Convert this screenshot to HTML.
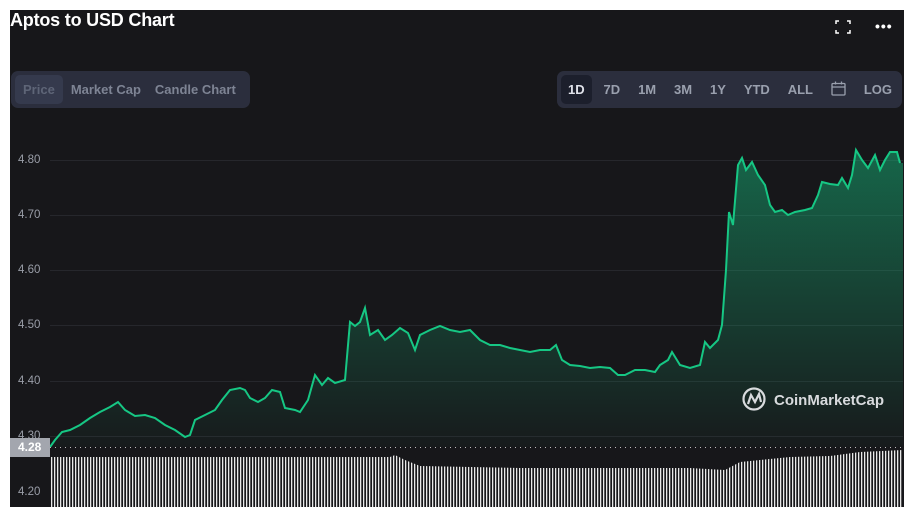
<!DOCTYPE html><html><head><style>
body{margin:0;width:914px;height:518px;background:#fff;overflow:hidden;font-family:"Liberation Sans",sans-serif;position:relative}
#p{position:absolute;left:10px;top:10px;width:894px;height:497px;background:#17171a}
.t{position:absolute;left:10px;top:10px;color:#fff;font-weight:bold;font-size:18px;line-height:21px;letter-spacing:-0.2px}
.grp{position:absolute;height:37px;top:71px;background:#2b2e3d;border-radius:7px;display:flex;align-items:center;padding:0 4px;box-sizing:border-box;font-size:13px;font-weight:bold;color:#7e8494}
.grp span{padding:0 6px;height:29px;line-height:29px;border-radius:5px}
.ax{position:absolute;left:18px;color:#9a9ea8;font-size:11.5px}
</style></head><body>
<div id="p"></div>
<div class="t">Aptos to USD Chart</div>
<div style="position:absolute;left:835px;top:20px;width:16px;height:14px;color:#fff">
<svg width="16" height="14"><path d="M1 4V1H4M12 1H15V4M15 10V13H12M4 13H1V10" stroke="#fff" stroke-width="1.5" fill="none"/></svg></div>
<div style="position:absolute;left:875px;top:18px;color:#fff;font-size:14px;font-weight:bold;letter-spacing:1px">•••</div>
<div class="grp" style="left:11px;width:239px"><span style="background:#353a4d;color:#5e6577;padding:0 8px">Price</span><span style="margin-left:2px">Market Cap</span><span style="margin-left:2px">Candle Chart</span></div>
<div class="grp" style="left:557px;width:345px;justify-content:space-between;color:#9aa0ae"><span style="background:#1c1f2c;color:#e0e2ea;padding:0 7px">1D</span><span>7D</span><span>1M</span><span>3M</span><span>1Y</span><span>YTD</span><span>ALL</span><span><svg width="15" height="15" style="vertical-align:-2px"><rect x="1" y="2.5" width="13" height="11.5" rx="1" stroke="#9aa0ae" fill="none" stroke-width="1.3"/><path d="M1 6H14M4.5 0.5V3.5M10.5 0.5V3.5" stroke="#9aa0ae" stroke-width="1.3"/></svg></span><span>LOG</span></div>
<svg style="position:absolute;left:0;top:0" width="914" height="518">
<defs><linearGradient id="g" x1="0" y1="0" x2="0" y2="1"><stop offset="0" stop-color="#16c784" stop-opacity=".45"/><stop offset="1" stop-color="#16c784" stop-opacity="0.02"/></linearGradient>
<pattern id="b" width="3" height="100" patternUnits="userSpaceOnUse"><rect x="0" width="1.3" height="100" fill="#e8e8e8"/></pattern></defs>
<g stroke="#26272c" stroke-width="1"><line x1="50" x2="903" y1="160.5" y2="160.5"/><line x1="50" x2="903" y1="215.5" y2="215.5"/><line x1="50" x2="903" y1="270.5" y2="270.5"/><line x1="50" x2="903" y1="325.5" y2="325.5"/><line x1="50" x2="903" y1="381.5" y2="381.5"/><line x1="50" x2="903" y1="436.5" y2="436.5"/></g>
<path id="l" fill="url(#g)" d="M50 447 L55 440 L62 432 L70 430 L80 425 L90 418 L95 415 L100 412 L110 407 L118 402 L125 410 L135 416 L145 415 L155 418 L165 425 L175 430 L185 437 L190 435 L195 420 L205 415 L215 410 L222 400 L230 390 L240 388 L245 390 L250 398 L258 402 L265 398 L272 390 L280 392 L285 408 L295 410 L300 412 L308 400 L315 375 L322 385 L328 378 L335 383 L345 380 L350 322 L355 326 L360 322 L365 308 L370 335 L378 330 L385 340 L392 335 L400 328 L408 333 L415 350 L420 335 L430 330 L440 326 L450 330 L460 332 L470 330 L480 340 L490 345 L500 345 L510 348 L520 350 L530 352 L540 350 L550 350 L556 345 L562 360 L570 365 L580 366 L590 368 L600 367 L610 368 L618 375 L625 375 L635 370 L645 370 L655 372 L660 365 L668 360 L672 352 L680 365 L690 368 L700 365 L705 342 L710 348 L718 340 L722 325 L726 270 L729 212 L733 225 L738 165 L742 158 L746 170 L752 162 L758 175 L765 185 L770 205 L775 212 L782 210 L788 215 L795 212 L805 210 L812 208 L818 195 L822 182 L830 184 L838 185 L842 178 L848 188 L852 175 L856 150 L862 160 L868 168 L875 155 L880 170 L885 160 L890 152 L897 152 L900 163 L903 163 L903 447 L50 447Z"/>
<path fill="none" stroke="#16c784" stroke-width="2" d="M50 447 L55 440 L62 432 L70 430 L80 425 L90 418 L95 415 L100 412 L110 407 L118 402 L125 410 L135 416 L145 415 L155 418 L165 425 L175 430 L185 437 L190 435 L195 420 L205 415 L215 410 L222 400 L230 390 L240 388 L245 390 L250 398 L258 402 L265 398 L272 390 L280 392 L285 408 L295 410 L300 412 L308 400 L315 375 L322 385 L328 378 L335 383 L345 380 L350 322 L355 326 L360 322 L365 308 L370 335 L378 330 L385 340 L392 335 L400 328 L408 333 L415 350 L420 335 L430 330 L440 326 L450 330 L460 332 L470 330 L480 340 L490 345 L500 345 L510 348 L520 350 L530 352 L540 350 L550 350 L556 345 L562 360 L570 365 L580 366 L590 368 L600 367 L610 368 L618 375 L625 375 L635 370 L645 370 L655 372 L660 365 L668 360 L672 352 L680 365 L690 368 L700 365 L705 342 L710 348 L718 340 L722 325 L726 270 L729 212 L733 225 L738 165 L742 158 L746 170 L752 162 L758 175 L765 185 L770 205 L775 212 L782 210 L788 215 L795 212 L805 210 L812 208 L818 195 L822 182 L830 184 L838 185 L842 178 L848 188 L852 175 L856 150 L862 160 L868 168 L875 155 L880 170 L885 160 L890 152 L897 152 L900 163"/>
<rect x="50" y="447" width="853" height="60" fill="#17171a"/>
<path fill="url(#b)" d="M50 457 L390 457 L395 455 L405 460 L420 466 L520 468 L690 468 L725 470 L740 462 L760 460 L790 457 L830 456 L860 452 L903 450 L903 507 L50 507Z"/>
<line x1="50" x2="903" y1="447.5" y2="447.5" stroke="#bbb" stroke-dasharray="1 4"/>
<g fill="none" stroke="#d8dadd" stroke-width="2.2"><circle cx="754" cy="399" r="10.5"/><path d="M748 404 L751 395 L755 402 L759 394 L761 402"/></g>
<text x="774" y="405" fill="#d8dadd" font-size="15" font-weight="bold" font-family="Liberation Sans">CoinMarketCap</text>
</svg>
<div class="ax" style="top:154px">4.80</div><div class="ax" style="top:209px">4.70</div><div class="ax" style="top:264px">4.60</div><div class="ax" style="top:319px">4.50</div><div class="ax" style="top:375px">4.40</div><div class="ax" style="top:430px">4.30</div><div class="ax" style="top:486px">4.20</div>
<div style="position:absolute;left:10px;top:438px;width:40px;height:19px;background:#a3a6ae;color:#fff;font-size:12px;font-weight:bold;line-height:19px;text-indent:8px">4.28</div>
</body></html>
